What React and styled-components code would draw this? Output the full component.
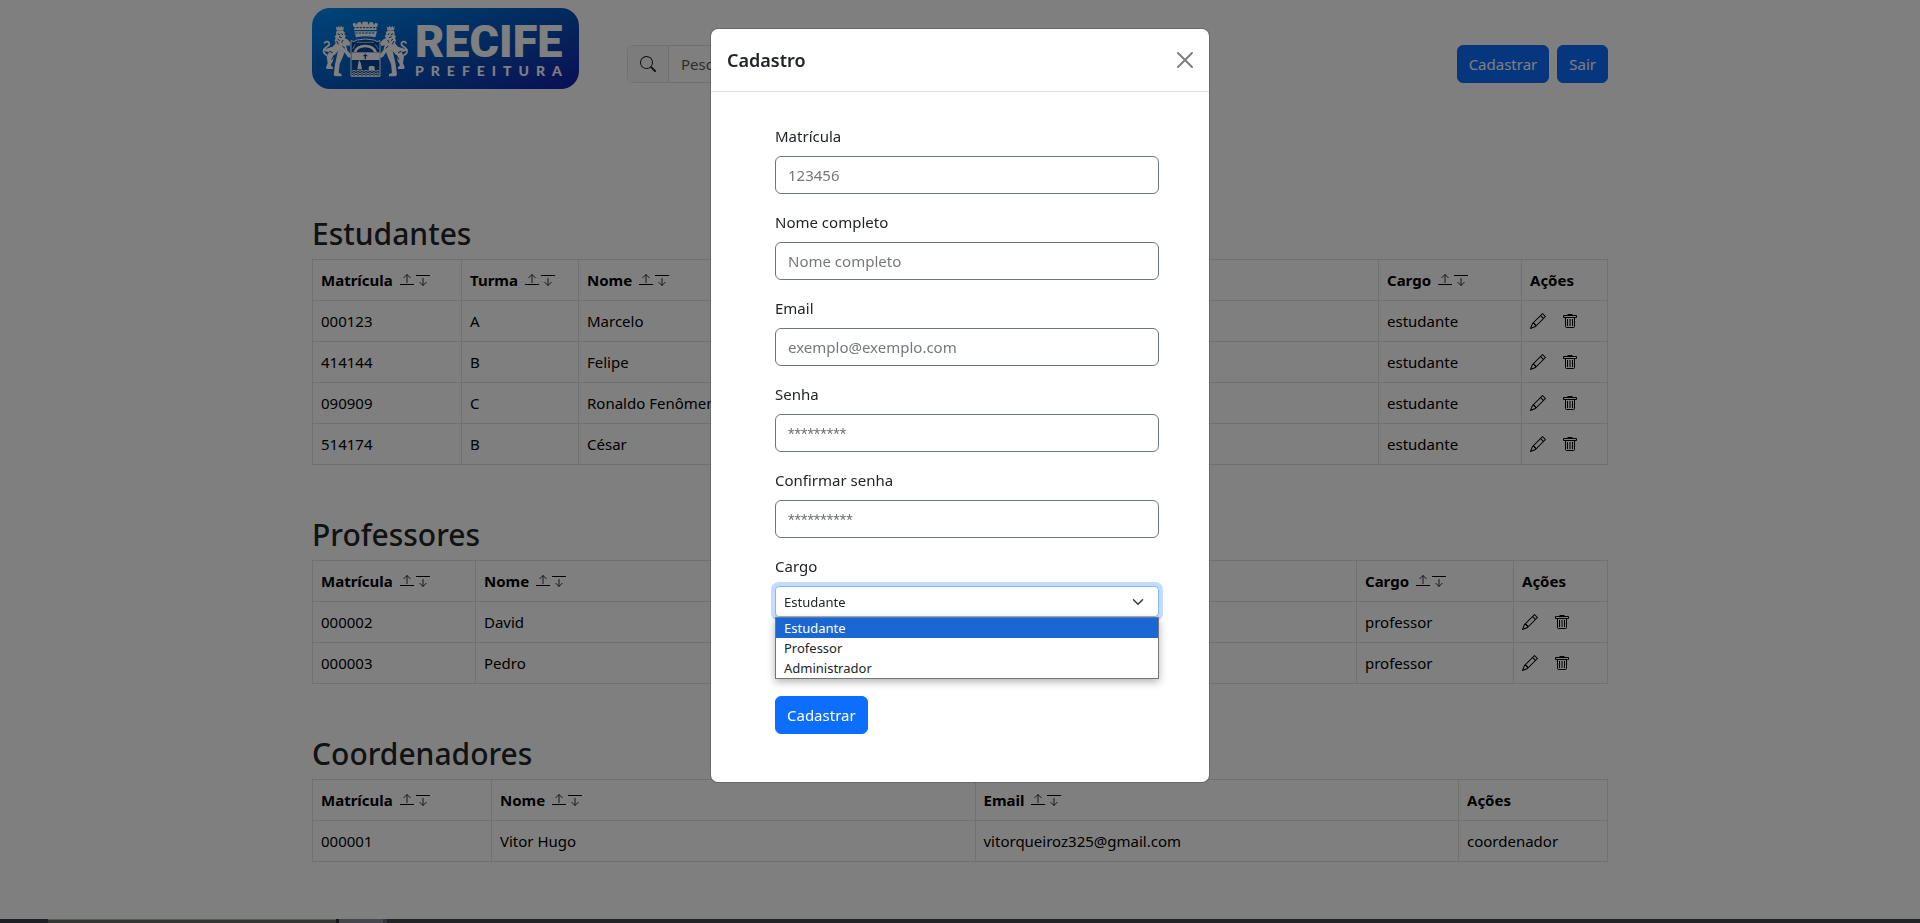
import React, { useState } from "react";
import styled, { createGlobalStyle } from "styled-components";
import { BsPencil, BsSearch } from "react-icons/bs";

const GlobalStyle = createGlobalStyle`
  *, *::before, *::after { box-sizing: border-box; }
  body {
    margin: 0;
    background: #fff;
    color: #212529;
    font-family: "Noto Sans", "Open Sans", sans-serif;
    font-size: 15px;
    line-height: 24px;
  }
  input, button, select { font: inherit; }
`;

const Page = styled.main`
  max-width: 1296px;
  margin: 0 auto;
  padding-bottom: 56px;
`;

const Navbar = styled.header`
  display: flex;
  align-items: flex-end;
  gap: 48px;
  padding: 8px 0;
  margin-bottom: 115px;
`;

const Logo = styled.a`
  display: flex;
  align-items: center;
  flex: none;
  width: 267px;
  height: 81px;
  padding: 0 0 0 6px;
  border-radius: 18px;
  background: linear-gradient(160deg, #008cf4 0%, #0066cc 35%, #0a48b4 65%, #141eb0 100%);
  color: #fff;
  text-decoration: none;
`;

const LogoWords = styled.span`
  display: flex;
  flex-direction: column;
  padding-left: 1px;
`;

const LogoName = styled.span`
  font-family: Roboto, sans-serif;
  font-weight: 900;
  font-size: 45px;
  line-height: 45px;
`;

const LogoSub = styled.span`
  font-family: Lato, sans-serif;
  font-weight: 900;
  font-size: 14px;
  line-height: 14px;
  letter-spacing: 7px;
`;

const Search = styled.label`
  display: flex;
  flex: 0 1 500px;
  height: 38px;
  margin-bottom: 6px;
  border: 1px solid #dee2e6;
  border-radius: 6px;
  overflow: hidden;
`;

const SearchIcon = styled.span`
  display: flex;
  align-items: center;
  padding: 0 12px;
  background: #f8f9fa;
  border-right: 1px solid #dee2e6;
  font-size: 16px;
`;

const SearchInput = styled.input`
  flex: 1;
  min-width: 0;
  border: 0;
  padding: 6px 12px;
  background: #fff;
  &::placeholder { color: #595c5f; opacity: 1; }
`;

const Actions = styled.div`
  display: flex;
  gap: 8px;
  margin: 0 0 6px auto;
`;

const Button = styled.button`
  height: 38px;
  padding: 0 11px;
  border: 1px solid #0d6efd;
  border-radius: 6px;
  background: #0d6efd;
  color: #fff;
`;

const Section = styled.section`
  margin-bottom: 48px;
`;

const Heading = styled.h2`
  margin: 0 0 4px;
  font-size: 30px;
  font-weight: 500;
  line-height: 43px;
`;

const Table = styled.table`
  width: 100%;
  table-layout: fixed;
  border-collapse: collapse;
  color: #000;
`;

const Cell = styled.td`
  height: 41px;
  padding: 8px;
  border: 1px solid #dee2e6;
  text-align: left;
  white-space: nowrap;
  overflow: hidden;
`;

const CellRow = styled.div`
  display: flex;
  align-items: center;
  gap: ${(p) => p.$gap}px;
`;

const IconButton = styled.button`
  display: flex;
  padding: 0;
  border: 0;
  background: none;
  color: inherit;
  font-size: 16px;
`;

const SortPair = styled.span`
  display: flex;
  gap: 2px;
`;

const Backdrop = styled.div`
  position: fixed;
  inset: 0;
  display: flex;
  align-items: flex-start;
  justify-content: center;
  padding: 28px 16px;
  background: rgba(0, 0, 0, 0.5);
`;

const Dialog = styled.div`
  width: 100%;
  max-width: 500px;
  border: 1px solid rgba(0, 0, 0, 0.175);
  border-radius: 8px;
  background: #fff;
  background-clip: padding-box;
`;

const DialogHeader = styled.div`
  display: flex;
  align-items: center;
  justify-content: space-between;
  padding: 16px;
  border-bottom: 1px solid #dee2e6;
`;

const DialogTitle = styled.h1`
  margin: 0;
  font-size: 18px;
  font-weight: 600;
  line-height: 30px;
`;

const Close = styled.button`
  display: flex;
  padding: 0;
  border: 0;
  background: none;
  opacity: 0.5;
`;

const Form = styled.form`
  padding: 32px 50px 48px 64px;
`;

const Field = styled.div`
  margin-bottom: ${(p) => p.$after || 16}px;
`;

const Label = styled.label`
  display: block;
  margin-bottom: 8px;
`;

const Input = styled.input`
  display: block;
  width: 100%;
  height: 38px;
  padding: 6px 12px;
  border: 1px solid #6c757d;
  border-radius: 6px;
  background: #fff;
  &::placeholder { color: #75797c; opacity: 1; }
  &[type="password"]::placeholder { font-family: Roboto, sans-serif; }
`;

const SelectBox = styled.div`
  position: relative;
`;

const Select = styled.select`
  display: block;
  width: 100%;
  height: 31px;
  padding: 5px 8px 3px;
  appearance: none;
  border: 1px solid #86b7fe;
  border-radius: 4px;
  outline: 0;
  background: #fff;
  color: #212529;
  box-shadow: 0 0 0 4px rgba(13, 110, 253, 0.25);
  font-size: 13px;
  line-height: 21px;
`;

const Chevron = styled.svg`
  position: absolute;
  top: 10px;
  right: 15px;
  pointer-events: none;
`;

const Options = styled.ul`
  position: absolute;
  top: 100%;
  left: 0;
  right: 0;
  margin: 0;
  padding: 0;
  list-style: none;
  border: 1px solid #767676;
  background: #fff;
  box-shadow: 0 3px 8px rgba(0, 0, 0, 0.3);
  font-size: 13px;
  line-height: 20px;
`;

const Option = styled.li`
  padding: 0 8px;
  background: ${(p) => (p.$active ? "#1967d2" : "#fff")};
  color: ${(p) => (p.$active ? "#fff" : "#212529")};
`;

const Taskbar = styled.div`
  position: fixed;
  left: 0;
  right: 0;
  bottom: 0;
  display: flex;
  height: 4px;
  background: #212326;
`;

const TaskbarPart = styled.span`
  width: ${(p) => p.$w}px;
  background: ${(p) => p.$color};
  border-top: ${(p) => (p.$edge ? "1px solid #5a5a58" : "0")};
`;

function Lion() {
  return (
    <g>
      <path d="M53 34l5 4 3-6 4 6 4-6 4 6 5-4-2 12H56z" fill="currentColor" />
      <path
        d="M56 47l18-1 7 7-2 5 5 5-4 6 10 5 7 10-3 9-10-2 4 15 10 12v10l-8-1-9-13-13-9-8 3-12 14-3 15-7 13 7 8-1 4H26l-2-5 5-12-3-20 7-14-12-2-6-6 7-1 22-7 9-10-3-9 3-6-3-6 5-4-1-7z"
        fill="currentColor"
      />
      <path d="M60 107l11-3 8 9-5 14-9 20-3 26 9 5v6H51l-4-5 4-31z" fill="currentColor" />
      <path
        d="M28 121c-13-4-15-17-5-23 8-5 14-8 10-15-4-6-13-3-14 3"
        fill="none" stroke="currentColor" strokeWidth="5"
      />
      <path d="M59 56l7 3m4-3l5 3m-12 6l8 3m-12 4l6 5m10-2l-4 8m-15-5l5 10m12 5l8 7M34 109l10 4m5 7l-8 14" fill="none" stroke="#034e9c" strokeWidth="3" />
    </g>
  );
}

function Crest() {
  return (
    <svg width="96" height="68" viewBox="0 0 288 204" aria-hidden="true">
      <Lion />
      <g transform="translate(284 0) scale(-1 1)"><Lion /></g>
      <path d="M104 26l8-3 2 7 6-8 8-1 2 8 5-9h13l4 9 4-8 8 1 4 8 4-7 8 3-5 19H109z" fill="currentColor" />
      <path d="M109 49h68l-5 18q-29-7-58 0z" fill="currentColor" />
      <path d="M105 38l75 0M112 54h60" stroke="#034e9c" strokeWidth="3" strokeDasharray="7 3" />
      <path d="M99 77q10 6 18-2 26-6 51 0 9 8 18 2v107H99z" fill="#04479a" stroke="currentColor" strokeWidth="3" />
      <path d="M101 112h84v23h-84z" fill="currentColor" />
      <path d="M107 111q5-21 35-22 29 1 35 22h-9q-6-13-26-14-21 1-27 14z" fill="currentColor" />
      <path d="M116 82h52M112 88l-8 14M172 88l9 14" stroke="currentColor" strokeWidth="2" />
      <path d="M142 116v17M136 122h12" stroke="#034e9c" strokeWidth="4" />
      <path d="M118 163l3-20 3-8 4 8 4 20zM152 157l3-4h12l3 4v9h-18z" fill="currentColor" />
      <path
        d="M102 169l6-3 6 3 6-3 6 3 6-3 6 3 6-3 6 3 6-3 6 3 6-3 6 3 6-3 4 3M102 176l6-3 6 3 6-3 6 3 6-3 6 3 6-3 6 3 6-3 6 3 6-3 6 3 6-3 4 3M102 182l6-3 6 3 6-3 6 3 6-3 6 3 6-3 6 3 6-3 6 3 6-3 6 3 6-3 4 3"
        fill="none" stroke="currentColor" strokeWidth="3"
      />
    </svg>
  );
}

function TrashIcon() {
  return (
    <svg width="16" height="16" viewBox="0 0 16 16" fill="none" stroke="currentColor">
      <path d="M1.500 2.500h13v2h-13zM5.500 1.500h5M3.500 4.500v9q0 1 1 1h7q1 0 1-1v-9M5.500 6v7M8 6v7M10.500 6v7" />
    </svg>
  );
}

function SortIcons() {
  return (
    <SortPair>
      <IconButton type="button" aria-label="Ordem crescente">
        <svg width="14" height="14" viewBox="0 0 14 14" fill="none" stroke="currentColor">
          <path d="M0 11.500h14" />
          <path d="M7 10V1.500M3.500 5L7 1.500l3.500 3.500" strokeWidth="0.800" />
        </svg>
      </IconButton>
      <IconButton type="button" aria-label="Ordem decrescente">
        <svg width="14" height="14" viewBox="0 0 14 14" fill="none" stroke="currentColor">
          <path d="M0 2.500h14" />
          <path d="M7 5v7.500M3.500 9L7 12.500l3.500-3.500" strokeWidth="0.800" />
        </svg>
      </IconButton>
    </SortPair>
  );
}

function DataTable({ title, columns, rows, editable }) {
  return (
    <Section>
      <Heading>{title}</Heading>
      <Table>
        <colgroup>
          {columns.map((c) => <col key={c.name} width={c.width} />)}
        </colgroup>
        <thead>
          <tr>
            {columns.map((c) => (
              <Cell as="th" scope="col" key={c.name}>
                <CellRow $gap={7}>
                  {c.name}
                  {c.name !== "Ações" && <SortIcons />}
                </CellRow>
              </Cell>
            ))}
          </tr>
        </thead>
        <tbody>
          {rows.map((row) => (
            <tr key={row[0]}>
              {row.map((value, i) => <Cell key={i}>{value}</Cell>)}
              {editable && (
                <Cell>
                  <CellRow $gap={16}>
                    <IconButton type="button" aria-label="Editar"><BsPencil /></IconButton>
                    <IconButton type="button" aria-label="Excluir"><TrashIcon /></IconButton>
                  </CellRow>
                </Cell>
              )}
            </tr>
          ))}
        </tbody>
      </Table>
    </Section>
  );
}

const tables = [
  {
    title: "Estudantes",
    editable: true,
    columns: [
      { name: "Matrícula", width: "149" },
      { name: "Turma", width: "117" },
      { name: "Nome" },
      { name: "Email" },
      { name: "Cargo", width: "143" },
      { name: "Ações", width: "86" },
    ],
    rows: [
      ["000123", "A", "Marcelo", "", "estudante"],
      ["414144", "B", "Felipe", "", "estudante"],
      ["090909", "C", "Ronaldo Fenômeno", "", "estudante"],
      ["514174", "B", "César", "", "estudante"],
    ],
  },
  {
    title: "Professores",
    editable: true,
    columns: [
      { name: "Matrícula", width: "163" },
      { name: "Nome" },
      { name: "Email" },
      { name: "Cargo", width: "157" },
      { name: "Ações", width: "94" },
    ],
    rows: [
      ["000002", "David", "", "professor"],
      ["000003", "Pedro", "", "professor"],
    ],
  },
  {
    title: "Coordenadores",
    columns: [
      { name: "Matrícula", width: "179" },
      { name: "Nome" },
      { name: "Email" },
      { name: "Ações", width: "149" },
    ],
    rows: [["000001", "Vitor Hugo", "vitorqueiroz325@gmail.com", "coordenador"]],
  },
];

const fields = [
  { id: "matricula", label: "Matrícula", type: "text", placeholder: "123456" },
  { id: "nome", label: "Nome completo", type: "text", placeholder: "Nome completo" },
  { id: "email", label: "Email", type: "email", placeholder: "exemplo@exemplo.com" },
  { id: "senha", label: "Senha", type: "password", placeholder: "*********" },
  { id: "confirmar", label: "Confirmar senha", type: "password", placeholder: "**********" },
];

const roles = ["Estudante", "Professor", "Administrador"];

export default function App() {
  const [role, setRole] = useState(roles[0]);
  return (
    <>
      <GlobalStyle />
      <Page>
        <Navbar>
          <Logo href="#">
            <Crest />
            <LogoWords>
              <LogoName>RECIFE</LogoName>
              <LogoSub>PREFEITURA</LogoSub>
            </LogoWords>
          </Logo>
          <Search>
            <SearchIcon><BsSearch /></SearchIcon>
            <SearchInput type="search" placeholder="Pesquisar" aria-label="Pesquisar" />
          </Search>
          <Actions>
            <Button type="button">Cadastrar</Button>
            <Button type="button">Sair</Button>
          </Actions>
        </Navbar>
        {tables.map((t) => <DataTable key={t.title} {...t} />)}
      </Page>
      <Backdrop>
        <Dialog role="dialog" aria-modal="true" aria-labelledby="dialog-title">
          <DialogHeader>
            <DialogTitle id="dialog-title">Cadastro</DialogTitle>
            <Close type="button" aria-label="Fechar">
              <svg width="16" height="16" viewBox="0 0 16 16" stroke="#000" strokeWidth="2" strokeLinecap="round">
                <path d="M1 1l14 14M15 1L1 15" />
              </svg>
            </Close>
          </DialogHeader>
          <Form>
            {fields.map((f) => (
              <Field key={f.id}>
                <Label htmlFor={f.id}>{f.label}</Label>
                <Input id={f.id} type={f.type} placeholder={f.placeholder} />
              </Field>
            ))}
            <Field $after={79}>
              <Label htmlFor="cargo">Cargo</Label>
              <SelectBox>
                <Select id="cargo" value={role} onChange={(e) => setRole(e.target.value)}>
                  {roles.map((r) => <option key={r}>{r}</option>)}
                </Select>
                <Chevron width="12" height="12" viewBox="0 0 16 16" fill="none" stroke="#343a40" strokeWidth="2" strokeLinecap="round" strokeLinejoin="round">
                  <path d="m2 5 6 6 6-6" />
                </Chevron>
                <Options role="listbox" aria-label="Cargo">
                  {roles.map((r) => (
                    <Option key={r} role="option" aria-selected={r === role} $active={r === role} onClick={() => setRole(r)}>
                      {r}
                    </Option>
                  ))}
                </Options>
              </SelectBox>
            </Field>
            <Button type="button">Cadastrar</Button>
          </Form>
        </Dialog>
      </Backdrop>
      <Taskbar aria-hidden="true">
        <TaskbarPart $w={48} $color="#1b2226" />
        <TaskbarPart $w={288} $color="#343634" $edge />
        <TaskbarPart $w={3} $color="#15161b" />
        <TaskbarPart $w={44} $color="#46464e" />
        <TaskbarPart $w={4} $color="#34343c" />
      </Taskbar>
    </>
  );
}
